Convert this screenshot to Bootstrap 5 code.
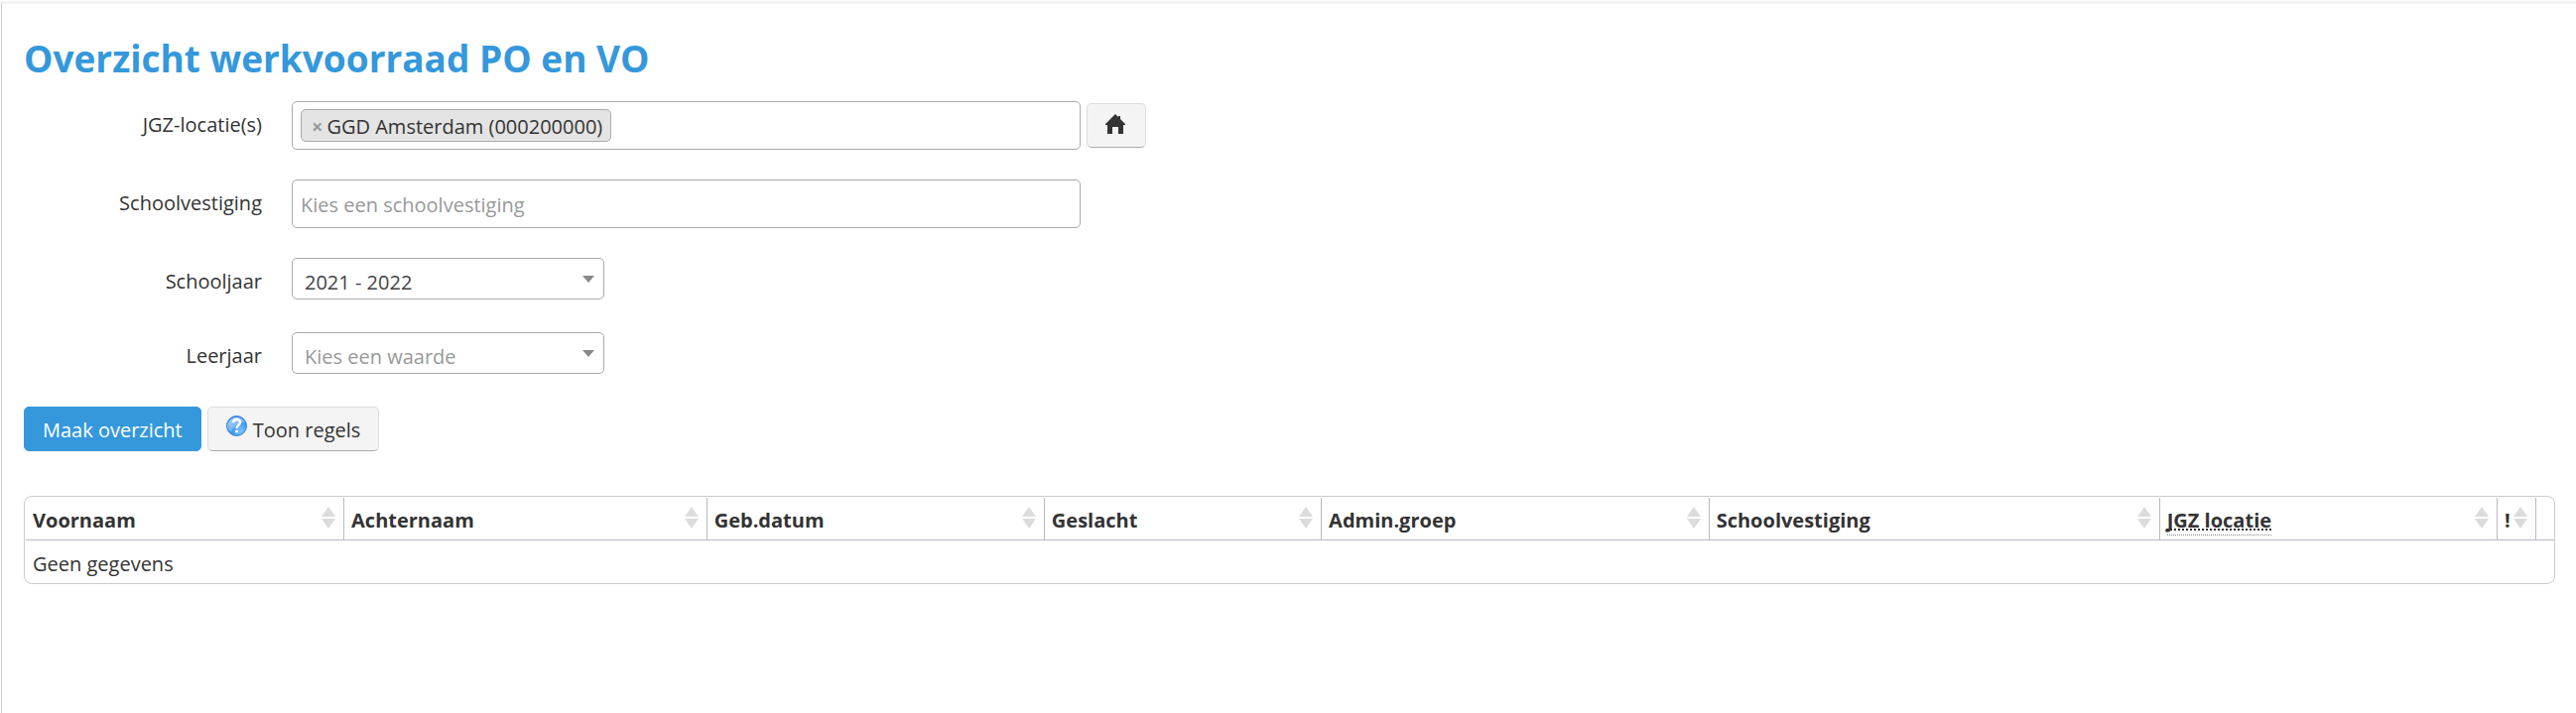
<!DOCTYPE html>
<html lang="nl">
<head>
<meta charset="utf-8">
<meta name="viewport" content="width=device-width, initial-scale=1">
<title>Overzicht werkvoorraad PO en VO</title>
<link href="https://cdn.jsdelivr.net/npm/bootstrap@5.3.0/dist/css/bootstrap.min.css" rel="stylesheet">
<style>
  body { font-family: "Open Sans", "Noto Sans", sans-serif; font-size: 20px; line-height: 28px; color: #333; background: #fff; }
  .page-frame { min-height: 100vh; padding: 1px 0 0 1px; }
  .page-body { min-height: calc(100vh - 1px); border-top: 3px solid #f4f4f4; border-left: 1px solid #ccc; padding: 32px 21px 32px 22px; }
  .page-title { font-size: 37px; line-height: 46px; color: #3498db; margin-bottom: 20px; }
  .form-line { display: flex; margin-bottom: 30px; }
  .form-line-select { margin-bottom: 33px; }
  .form-line > label { flex: 0 0 240px; margin-right: 30px; text-align: right; padding-top: 10px; }
  .multi-box { flex: 0 1 795px; min-width: 0; height: 49px; border: 1px solid #aaa; border-radius: 5px; padding: 7px 8px; }
  .multi-box input { border: 0; outline: 0; padding: 2px 0 0; min-width: 0; background: transparent; color: #333; }
  .multi-box input::placeholder, .pick.is-empty { color: #999; }
  .chosen-tag { display: flex; align-items: center; height: 33px; padding: 2px 8px 0 10px; border: 1px solid #aaa; border-radius: 5px; background: #e4e4e4; white-space: nowrap; }
  .chosen-tag button { border: 0; background: none; padding: 0; margin-right: 4px; color: #999; font-weight: 700; line-height: 28px; }
  .pick { appearance: none; width: 315px; height: 42px; border: 1px solid #aaa; border-radius: 5px; padding: 8px 32px 0 12px; color: #444; background: #fff url("data:image/svg+xml,%3Csvg xmlns='http://www.w3.org/2000/svg' viewBox='0 0 12 7'%3E%3Cpath d='M0 0h12L6 7z' fill='%23888'/%3E%3C/svg%3E") no-repeat right 9px top 17px / 12px 7px; }
  .tool-btn { --bs-btn-font-size: 20px; --bs-btn-line-height: 28px; --bs-btn-border-radius: 5px; --bs-btn-padding-x: 18px; --bs-btn-padding-y: 0; height: 45px; padding-top: 2px; }
  .tool-light { --bs-btn-color: #333; --bs-btn-bg: #f4f4f4; --bs-btn-border-color: #ddd; --bs-btn-hover-bg: #e9e9e9; border-bottom-color: #aaa; }
  .tool-blue { --bs-btn-color: #fff; --bs-btn-bg: #3498db; --bs-btn-border-color: #3498db; --bs-btn-hover-color: #fff; --bs-btn-hover-bg: #2b86c4; }
  .home-btn { margin: 2px 0 0 6px; width: 60px; padding-top: 0; }
  .tool-row, .help-btn { gap: 6px; }
  .grid-frame { border: 1px solid #ccc; border-radius: 8px; padding: 1px 0 0 1px; margin-top: 45px; }
  .grid-table { width: 100%; table-layout: fixed; border-collapse: separate; border-spacing: 0; }
  .grid-table th, .grid-table td { padding: 4px 8px 0 7px; height: 43px; }
  .grid-table th { border-bottom: 1px solid #b9b9c4; border-right: 1px solid #b9b9c4; }
  .grid-table th:last-child { border-right: 0; }
  .grid-table th > div { display: flex; justify-content: space-between; align-items: center; }
  .grid-table svg { flex: none; margin-bottom: 6px; }
  .grid-table abbr { text-decoration: underline dotted 2px; text-underline-offset: 2px; text-decoration-skip-ink: none; border-bottom: 1px dotted #888; }
  .w-first { width: 12.6%; } .w-last { width: 14.35%; } .w-birth { width: 13.35%; }
  .w-sex { width: 10.96%; } .w-group { width: 15.33%; } .w-school { width: 17.82%; }
  .w-flag { width: 39px; } .w-end { width: 18px; }
</style>
</head>
<body>
<svg class="d-none" xmlns="http://www.w3.org/2000/svg"><symbol id="sort" viewBox="0 0 14 22"><path d="M7 0l7 10H0zM0 12h14L7 22z" fill="#dcdcdc"/></symbol></svg>
<div class="page-frame">
<main class="page-body">
  <h1 class="page-title fw-bold">Overzicht werkvoorraad PO en VO</h1>
  <form>
    <div class="form-line">
      <label for="locatie">JGZ-locatie(s)</label>
      <div class="multi-box d-flex align-items-center">
        <span class="chosen-tag"><button type="button" aria-label="Verwijderen">×</button>GGD Amsterdam (000200000)</span>
        <input id="locatie" class="flex-fill ms-2" type="text">
      </div>
      <button class="btn tool-btn tool-light home-btn" type="button" aria-label="Eigen locatie">
        <svg class="d-block mb-1" width="20" height="20" viewBox="0 0 20 20"><path d="M10 0l3 3V2h2v3l5 5v1h-2v9h-5v-7H7v7H2v-9H0v-1z" fill="#333"/></svg>
      </button>
    </div>
    <div class="form-line">
      <label for="school">Schoolvestiging</label>
      <div class="multi-box d-flex">
        <input id="school" class="flex-fill" type="text" placeholder="Kies een schoolvestiging">
      </div>
    </div>
    <div class="form-line form-line-select">
      <label for="jaar">Schooljaar</label>
      <select id="jaar" class="pick"><option>2021 - 2022</option></select>
    </div>
    <div class="form-line form-line-select">
      <label for="leerjaar">Leerjaar</label>
      <select id="leerjaar" class="pick is-empty"><option>Kies een waarde</option></select>
    </div>
    <div class="tool-row d-flex">
      <button class="btn tool-btn tool-blue" type="submit">Maak overzicht</button>
      <button class="btn tool-btn tool-light help-btn d-flex align-items-center" type="button">
        <svg class="mb-2" width="21" height="21" viewBox="0 0 21 21">
          <defs>
            <radialGradient id="ball" cx=".7" cy=".75" r=".8"><stop offset="0" stop-color="#7cc4fb"/><stop offset=".5" stop-color="#409cf2"/><stop offset="1" stop-color="#2f7fe0"/></radialGradient>
            <linearGradient id="shine" x1="0" y1="0" x2=".6" y2="1"><stop offset="0" stop-color="#fff" stop-opacity=".7"/><stop offset="1" stop-color="#fff" stop-opacity=".1"/></linearGradient>
          </defs>
          <circle cx="10.500" cy="10.500" r="10" fill="url(#ball)" stroke="#3b82d0"/>
          <path d="M1 11a9.500 9.500 0 0 1 18-4C14 7 8 9 5 17a9 9 0 0 1-4-6z" fill="url(#shine)"/>
          <path d="M7 7.200C7.300 2.700 14.500 3 14 7.300c-.3 2.300-3.400 2.700-3.400 5.600" fill="none" stroke="#fff" stroke-width="2.400"/>
          <circle cx="10.500" cy="16" r="1.500" fill="#fff"/>
        </svg>
        Toon regels
      </button>
    </div>
  </form>
  <div class="grid-frame">
    <table class="grid-table">
      <colgroup><col class="w-first"><col class="w-last"><col class="w-birth"><col class="w-sex"><col class="w-group"><col class="w-school"><col><col class="w-flag"><col class="w-end"></colgroup>
      <thead>
        <tr>
          <th><div>Voornaam<svg width="14" height="22"><use href="#sort"/></svg></div></th>
          <th><div>Achternaam<svg width="14" height="22"><use href="#sort"/></svg></div></th>
          <th><div>Geb.datum<svg width="14" height="22"><use href="#sort"/></svg></div></th>
          <th><div>Geslacht<svg width="14" height="22"><use href="#sort"/></svg></div></th>
          <th><div>Admin.groep<svg width="14" height="22"><use href="#sort"/></svg></div></th>
          <th><div>Schoolvestiging<svg width="14" height="22"><use href="#sort"/></svg></div></th>
          <th><div><abbr title="Jeugdgezondheidszorg locatie">JGZ locatie</abbr><svg width="14" height="22"><use href="#sort"/></svg></div></th>
          <th><div>!<svg width="14" height="22"><use href="#sort"/></svg></div></th>
          <th></th>
        </tr>
      </thead>
      <tbody><tr><td colspan="9">Geen gegevens</td></tr></tbody>
    </table>
  </div>
</main>
</div>
<script src="https://cdn.jsdelivr.net/npm/bootstrap@5.3.0/dist/js/bootstrap.bundle.min.js"></script>
</body>
</html>
